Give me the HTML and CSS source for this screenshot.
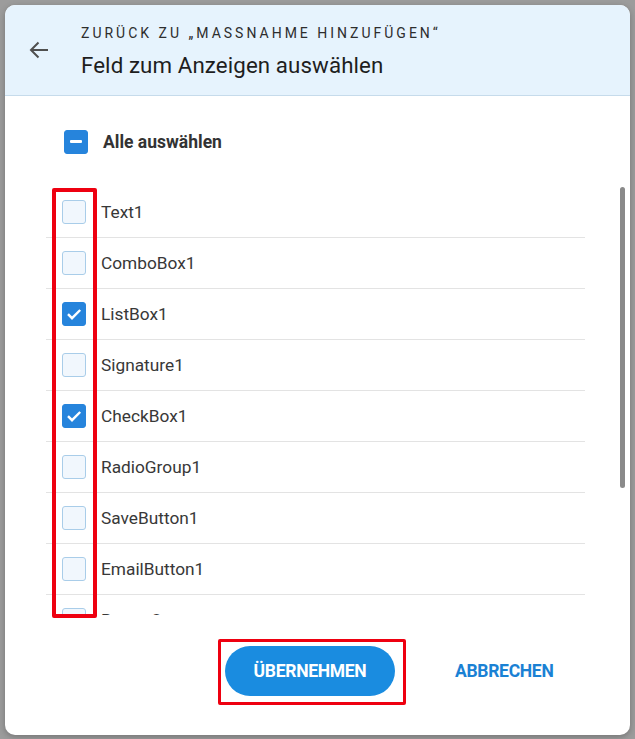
FILE: index.html
```html
<!DOCTYPE html>
<html lang="de">
<head>
<meta charset="utf-8">
<title>Feld zum Anzeigen auswählen</title>
<link rel="stylesheet" href="styles.css">
</head>
<body>
<div class="backdrop">
  <div class="dialog">
    <header class="dlg-head">
      <button class="back" aria-label="Zurück">
        <svg width="20" height="18" viewBox="0 0 20 18"><path d="M19 9H2M9.5 1.5L2 9l7.5 7.5" fill="none" stroke="#4f4f4f" stroke-width="2"/></svg>
      </button>
      <div class="head-text">
        <div class="crumb">Zurück zu „Massnahme hinzufügen“</div>
        <h1 class="title">Feld zum Anzeigen auswählen</h1>
      </div>
    </header>
    <div class="body">
      <div class="select-all">
        <span class="cb cb-ind"><span class="minus"></span></span>
        <span class="all-label">Alle auswählen</span>
      </div>
      <div class="list-wrap">
        <ul class="list">
          <li class="row"><span class="cb"></span><span class="lbl">Text1</span></li>
          <li class="row"><span class="cb"></span><span class="lbl">ComboBox1</span></li>
          <li class="row"><span class="cb cb-on"><svg width="16" height="12" viewBox="0 0 16 12"><path d="M2 6.2l4 4L14.2 2" fill="none" stroke="#fff" stroke-width="2.4"/></svg></span><span class="lbl">ListBox1</span></li>
          <li class="row"><span class="cb"></span><span class="lbl">Signature1</span></li>
          <li class="row"><span class="cb cb-on"><svg width="16" height="12" viewBox="0 0 16 12"><path d="M2 6.2l4 4L14.2 2" fill="none" stroke="#fff" stroke-width="2.4"/></svg></span><span class="lbl">CheckBox1</span></li>
          <li class="row"><span class="cb"></span><span class="lbl">RadioGroup1</span></li>
          <li class="row"><span class="cb"></span><span class="lbl">SaveButton1</span></li>
          <li class="row"><span class="cb"></span><span class="lbl">EmailButton1</span></li>
          <li class="row"><span class="cb"></span><span class="lbl">Button2</span></li>
        </ul>
        <div class="scrollbar"></div>
        <div class="mark mark-list"></div>
      </div>
      <div class="actions">
        <div class="btn-wrap">
          <button class="btn primary">Übernehmen</button>
          <div class="mark mark-btn"></div>
        </div>
        <button class="btn text">Abbrechen</button>
      </div>
    </div>
  </div>
</div>
</body>
</html>
```
FILE: styles.css
```css
* { box-sizing: border-box; }
html, body { margin: 0; padding: 0; }
body {
  width: 635px;
  height: 739px;
  overflow: hidden;
  background: #9c9c9c;
  font-family: Roboto, "Liberation Sans", Arial, sans-serif;
}
.backdrop {
  padding: 5px 5px 4px 5px;
  height: 739px;
}
.dialog {
  width: 625px;
  height: 730px;
  background: #fff;
  border-radius: 10px;
  overflow: hidden;
  display: flex;
  flex-direction: column;
  box-shadow: 0 2px 6px rgba(0,0,0,0.25);
}
.dlg-head {
  height: 91px;
  flex: none;
  background: #e6f3fd;
  border-bottom: 1px solid #c6dbeb;
  display: flex;
  align-items: flex-start;
  padding-left: 24px;
}
.back {
  border: 0;
  background: none;
  padding: 0;
  margin-top: 36px;
  width: 22px;
  height: 18px;
  display: flex;
}
.head-text {
  margin-left: 30px;
  padding-top: 18px;
}
.crumb {
  font-size: 14px;
  line-height: 20px;
  text-transform: uppercase;
  letter-spacing: 3px;
  color: #2d2d2d;
}
.title {
  margin: 8px 0 0 0;
  font-size: 22.3px;
  line-height: 28px;
  font-weight: 400;
  color: #1e1e1e;
  letter-spacing: 0.1px;
}
.body {
  flex: 1;
  display: flex;
  flex-direction: column;
}
.select-all {
  display: flex;
  align-items: center;
  padding: 21px 0 0 59px;
  height: 70px;
}
.cb {
  width: 24px;
  height: 24px;
  flex: none;
  border-radius: 3px;
  border: 1.5px solid #a9cde9;
  background: #f1f7fd;
  display: flex;
  align-items: center;
  justify-content: center;
}
.cb-ind, .cb-on {
  background: #2684dc;
  border-color: #2684dc;
}
.minus {
  width: 12px;
  height: 3px;
  background: #fff;
  border-radius: 1px;
}
.all-label {
  margin-left: 15px;
  font-size: 17.5px;
  font-weight: 700;
  color: #333;
}
.list-wrap {
  position: relative;
  margin-top: 21px;
  height: 428px;
}
.list {
  list-style: none;
  margin: 0 0 0 41px;
  padding: 0;
  width: 539px;
  height: 428px;
  overflow: hidden;
}
.row {
  height: 51px;
  border-bottom: 1px solid #e3e3e3;
  display: flex;
  align-items: center;
  padding-left: 16px;
}
.lbl {
  margin-left: 15px;
  font-size: 17.3px;
  color: #383838;
}
.scrollbar {
  position: absolute;
  left: 615px;
  top: 0;
  width: 5px;
  height: 301px;
  border-radius: 3px;
  background: #8a8a8a;
}
.mark {
  position: absolute;
  border: 4px solid #ee0010;
  pointer-events: none;
}
.mark-list {
  left: 47px;
  top: 1px;
  width: 45px;
  height: 430px;
  border-radius: 2px;
}
.actions {
  display: flex;
  align-items: center;
  padding: 31px 0 0 220px;
}
.btn-wrap {
  position: relative;
}
.btn {
  font-family: Roboto, "Liberation Sans", Arial, sans-serif;
  font-size: 17.5px;
  font-weight: 700;
  text-transform: uppercase;
  border: 0;
  cursor: pointer;
  letter-spacing: -0.3px;
}
.primary {
  width: 170px;
  height: 50px;
  border-radius: 25px;
  background: #1a8ce0;
  color: #fff;
}
.text {
  background: none;
  color: #1a81d4;
  margin-left: 60px;
  padding: 0;
}
.mark-btn {
  left: -7px;
  top: -7px;
  width: 188px;
  height: 66px;
  border-width: 3px;
  border-radius: 2px;
}
```
